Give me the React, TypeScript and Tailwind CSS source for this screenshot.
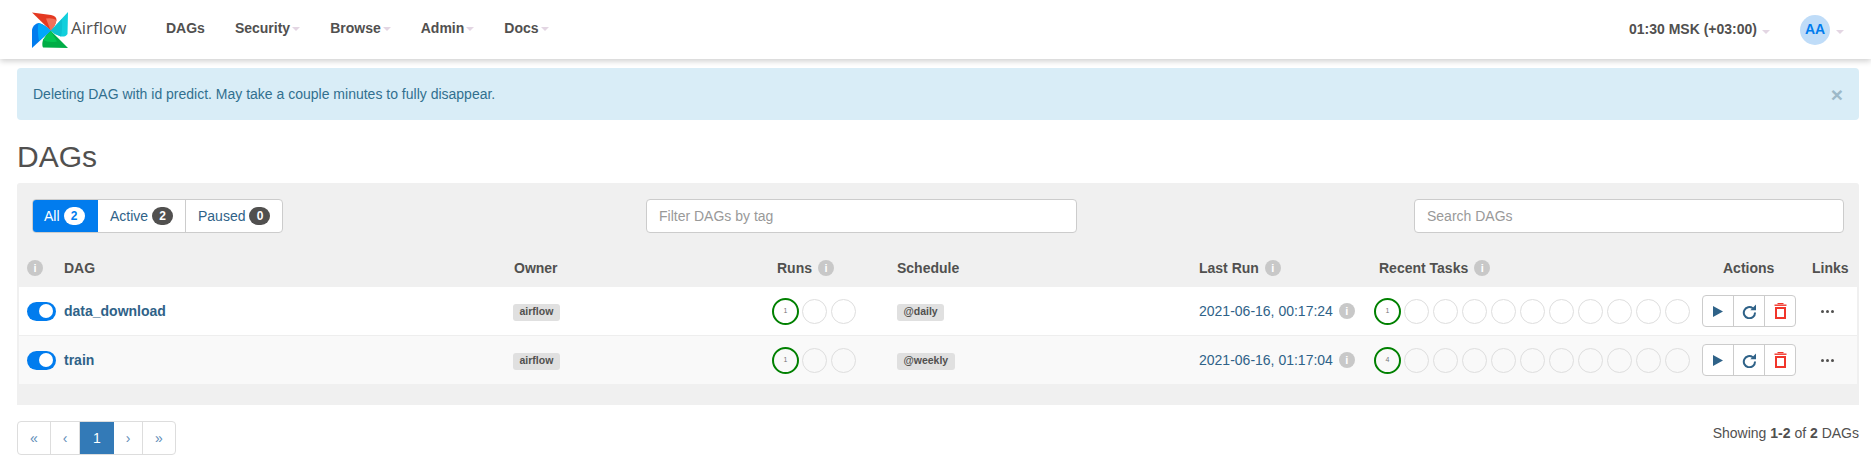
const COLS = "grid grid-cols-[37px_449px_259px_125px_302px_175px_328px_110px_45px] pl-2";

function Caret() {
  return <span className="inline-block ml-[2px] w-0 h-0 border-x-[4px] border-x-transparent border-t-[4px] border-t-[#e3d6e3]" />;
}

function Logo() {
  return (
    <svg width="36" height="36" viewBox="0 0 36 36" className="shrink-0">
      <path d="M0 0.5 L19 3 Q24.5 4 24.5 8 Q23.5 14 18.7 18.7 Z" fill="#e43921" />
      <path d="M18.7 18.7 Q23.5 14 24.5 8 Q20 5.5 14 6.5 Z" fill="#f1715a" />
      <path d="M36 0 L35.5 22 Q34 25 29 24.5 Q23 23 18.7 18.7 Q24 13 36 0 Z" fill="#11cfdc" />
      <path d="M18.7 18.7 Q23 23 29 24.5 Q30.5 18 30 7 Z" fill="#0cc0d0" />
      <path d="M36 36 L11 35.5 Q9.5 33 11 28 Q14 22.5 18.7 18.7 Z" fill="#00ad46" />
      <path d="M18.7 18.7 Q14 22.5 11 28 Q17 31 25 29.5 Z" fill="#04c653" />
      <path d="M0 36 L0 17.5 Q1.5 12 6.5 11 Q13 12.5 18.7 18.7 Z" fill="#017cee" />
      <path d="M18.7 18.7 Q13 12.5 6.5 11 Q5 18 7 29 Z" fill="#00a7fb" />
    </svg>
  );
}

function Info() {
  return (
    <span className="inline-flex items-center justify-center w-[16px] h-[16px] rounded-full bg-[#c8c8c8] text-white text-[11px] font-bold leading-none">
      i
    </span>
  );
}

function Toggle() {
  return (
    <span className="flex items-center justify-end w-[29px] h-[19px] rounded-full bg-[#017cee] pr-[3px]">
      <span className="w-[14px] h-[14px] rounded-full bg-white" />
    </span>
  );
}

function Badge({ children }: { children: string }) {
  return (
    <span className="inline-flex items-center mt-[2px] h-[17px] px-[6.5px] rounded-[3px] bg-[#e0e0e0] text-[10.5px] font-bold text-[#51504f]">
      {children}
    </span>
  );
}

function Circle({ n }: { n?: number }) {
  return (
    <span className="flex justify-center w-[29px] shrink-0">
      {n ? (
        <span className="flex items-center justify-center w-[27px] h-[27px] rounded-full border-2 border-[#008000] text-[7px] text-[#777]">
          {n}
        </span>
      ) : (
        <span className="w-[25px] h-[25px] rounded-full border border-[#dedede]" />
      )}
    </span>
  );
}

function Circles({ n, total }: { n: number; total: number }) {
  return (
    <div className="flex items-center -ml-px">
      <Circle n={n} />
      {Array.from({ length: total - 1 }, (_, i) => (
        <Circle key={i} />
      ))}
    </div>
  );
}

function PlayIcon() {
  return (
    <svg width="10" height="11" viewBox="0 0 10 11" fill="#2f6288">
      <path d="M0 0 L10 5.5 L0 11 Z" />
    </svg>
  );
}

function RefreshIcon() {
  return (
    <svg width="15" height="15" viewBox="0 0 15 15" fill="none">
      <path d="M10.8 4.2 A5.6 5.6 0 1 0 13 8.5" stroke="#2f6288" strokeWidth="2" />
      <path d="M14 0.5 V6.2 H8.3 Z" fill="#2f6288" />
    </svg>
  );
}

function Trash() {
  return (
    <svg width="13" height="16" viewBox="0 0 13 16" fill="none" stroke="#f1352a">
      <path d="M0.5 2.2 H12.5" strokeWidth="1.4" />
      <path d="M3.5 0.6 H9.5" strokeWidth="1.2" />
      <rect x="2" y="5" width="9" height="10" strokeWidth="2" />
    </svg>
  );
}

function Actions() {
  return (
    <div className="flex w-[94px] h-[32px] bg-white border border-[#ccc] rounded-[4px]">
      <span className="flex flex-1 items-center justify-center border-r border-[#ccc]">
        <PlayIcon />
      </span>
      <span className="flex flex-1 items-center justify-center border-r border-[#ccc]">
        <RefreshIcon />
      </span>
      <span className="flex flex-1 items-center justify-center">
        <Trash />
      </span>
    </div>
  );
}

function Row({ name, tasks, schedule, lastRun, striped }: { name: string; tasks: number; schedule: string; lastRun: string; striped?: boolean }) {
  return (
    <div className={`${COLS} items-center ${striped ? "h-[48px] bg-[#f9f9f9]" : "bg-white border-b border-[#eee] h-[49px]"}`}>
      <Toggle />
      <a className="font-bold text-[#2f6288]">{name}</a>
      <div className="flex">
        <Badge>airflow</Badge>
      </div>
      <Circles n={1} total={3} />
      <div className="flex">
        <Badge>{schedule}</Badge>
      </div>
      <div className="flex items-center gap-[6px]">
        <span className="text-[#2f6288]">{lastRun}</span>
        <Info />
      </div>
      <Circles n={tasks} total={11} />
      <Actions />
      <div className="flex gap-[2px] pl-[9px]">
        <span className="w-[3px] h-[3px] rounded-full bg-[#51504f]" />
        <span className="w-[3px] h-[3px] rounded-full bg-[#51504f]" />
        <span className="w-[3px] h-[3px] rounded-full bg-[#51504f]" />
      </div>
    </div>
  );
}

const pageBtn = "flex items-center justify-center border-r border-[#ddd] text-[#5f8db8]";

export default function App() {
  return (
    <div className="min-h-[472px] bg-white text-[14px] text-[#51504f] font-['Liberation_Sans',Arial,sans-serif]">
      {/* navbar */}
      <nav className="relative flex items-center h-[59px] pl-[32px] pr-[27px] bg-white shadow-[0_2px_6px_rgba(0,0,0,0.2)]">
        <div className="flex items-center">
          <Logo />
          <span className="w-[56px] ml-[3px] -mt-[4px] text-[17px] font-['Open_Sans',sans-serif] text-[#51504f]">Airflow</span>
        </div>
        <ul className="flex items-center ml-[24px] mt-[-2px] font-bold">
          <li className="px-[15px]">DAGs</li>
          <li className="px-[15px] flex items-center">Security<Caret /></li>
          <li className="px-[15px] flex items-center">Browse<Caret /></li>
          <li className="px-[15px] flex items-center">Admin<Caret /></li>
          <li className="px-[15px] flex items-center">Docs<Caret /></li>
        </ul>
        <div className="ml-auto flex items-center font-bold">
          <span className="flex items-center">01:30 MSK (+03:00)<span className="ml-[3px]"><Caret /></span></span>
          <span className="flex items-center justify-center ml-[30px] w-[30px] h-[30px] rounded-full bg-[#bfdcf8] text-[#017cee]">AA</span>
          <span className="ml-[4px]"><Caret /></span>
        </div>
      </nav>

      <main className="px-[17px] pr-[12px] pt-[9px]">
        {/* alert */}
        <div className="flex items-center justify-between h-[52px] pl-[16px] pr-[16px] rounded-[4px] bg-[#d9edf7] text-[#31708f]">
          <span>Deleting DAG with id predict. May take a couple minutes to fully disappear.</span>
          <span className="text-[21px] font-bold leading-none text-[#9db9c8]">×</span>
        </div>

        <h1 className="mt-[20px] text-[30px] leading-[33px] text-[#51504f]">DAGs</h1>

        {/* panel */}
        <section className="mt-[10px] h-[222px] rounded-t-[3px] bg-[#f0f0f0]">
          <div className="grid grid-cols-[614px_431px_1fr] pl-[15px] pr-[15px] pt-[16px]">
            <div className="flex h-[34px] w-[251px] rounded-[4px] border border-[#ccc] bg-white text-[#2f6288] overflow-hidden">
              <span className="flex items-center gap-[4px] w-[65px] pl-[11px] bg-[#017cee] text-white">
                All
                <span className="flex items-center justify-center w-[21px] h-[18px] rounded-full bg-white text-[12px] font-bold text-[#017cee]">2</span>
              </span>
              <span className="flex items-center gap-[4px] w-[88px] pl-[12px] border-r border-[#ccc]">
                Active
                <span className="flex items-center justify-center w-[21px] h-[18px] rounded-full bg-[#51504f] text-[12px] font-bold text-white">2</span>
              </span>
              <span className="flex items-center gap-[4px] flex-1 pl-[12px]">
                Paused
                <span className="flex items-center justify-center w-[21px] h-[18px] rounded-full bg-[#51504f] text-[12px] font-bold text-white">0</span>
              </span>
            </div>
            <input className="h-[34px] px-[12px] rounded-[4px] border border-[#ccc] bg-white placeholder:text-[#999]" placeholder="Filter DAGs by tag" />
            <div className="flex justify-end">
              <input className="h-[34px] w-[430px] px-[12px] rounded-[4px] border border-[#ccc] bg-white placeholder:text-[#999]" placeholder="Search DAGs" />
            </div>
          </div>

          {/* table */}
          <div className="mt-0 ml-[2px] mr-[2px]">
            <div className={`${COLS} items-center h-[54px] pt-[16px] font-bold`}>
              <Info />
              <span>DAG</span>
              <span className="pl-px">Owner</span>
              <span className="flex items-center gap-[6px] pl-[5px]">Runs <Info /></span>
              <span>Schedule</span>
              <span className="flex items-center gap-[6px]">Last Run <Info /></span>
              <span className="flex items-center gap-[6px] pl-[5px]">Recent Tasks <Info /></span>
              <span className="pl-[21px]">Actions</span>
              <span>Links</span>
            </div>
            <Row name="data_download" tasks={1} schedule="@daily" lastRun="2021-06-16, 00:17:24" />
            <Row name="train" tasks={4} schedule="@weekly" lastRun="2021-06-16, 01:17:04" striped />
          </div>
        </section>

        {/* pagination */}
        <div className="flex items-start justify-between mt-[16px]">
          <div className="flex h-[34px] w-[159px] rounded-[4px] border border-[#ddd] overflow-hidden">
            <span className={`${pageBtn} w-[33px]`}>«</span>
            <span className={`${pageBtn} w-[29px]`}>‹</span>
            <span className="flex items-center justify-center w-[34px] bg-[#337ab7] text-white">1</span>
            <span className={`${pageBtn} w-[29px]`}>›</span>
            <span className={`${pageBtn} flex-1 border-r-0`}>»</span>
          </div>
          <p className="mt-[2px]">
            Showing <b>1-2</b> of <b>2</b> DAGs
          </p>
        </div>
      </main>
    </div>
  );
}
